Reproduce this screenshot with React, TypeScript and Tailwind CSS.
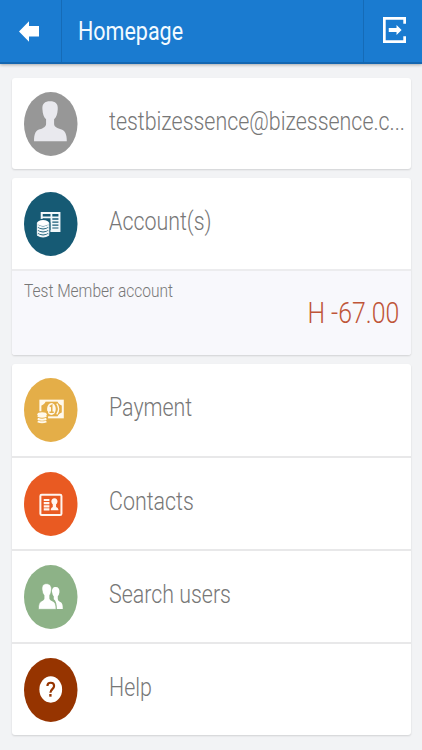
import type { ReactNode } from "react";

function Badge({ color, children }: { color: string; children: ReactNode }) {
  return (
    <svg viewBox="0 0 160 192" preserveAspectRatio="none" className="h-16 w-[53.5px] shrink-0">
      <ellipse cx="80" cy="96" rx="80" ry="96" fill={color} />
      {children}
    </svg>
  );
}

const AvatarIcon = (
  <Badge color="#979797">
    <path fill="#e9e9ee" d="M78 28C62 28 54 36 55 51C56 66 59 75 66 82V95C66 104 58 108 47 112C35 116 30 125 30 148H128C128 125 122 116 110 112C98 107 90 104 90 95V82C97 75 100 66 101 51C102 36 94 28 78 28Z" />
  </Badge>
);

const AccountIcon = (
  <Badge color="#165a74">
    <rect x="53" y="63" width="53" height="54" fill="none" stroke="#f1f7f9" strokeWidth="6" />
    <path stroke="#f1f7f9" strokeWidth="5.500" d="M53 76H106M82 63V117M82 86H106M82 95H106M82 104H106M82 112H106" />
    <path fill="#165a74" d="M35 92Q40 80 57 80T79 92V140H35Z" />
    <ellipse cx="57" cy="93" rx="18" ry="9" fill="#fff" />
    <path fill="none" stroke="#f1f7f9" strokeWidth="6" d="M40 101Q57 112 74 101M40 110Q57 121 74 110M40 119Q57 130 74 119M40 128Q57 139 74 128" />
    <path fill="none" stroke="#f1f7f9" strokeWidth="3" d="M40 92V128M74 92V128" />
  </Badge>
);

const PaymentIcon = (
  <Badge color="#e4ae48">
    <rect x="49" y="68" width="67" height="50" fill="none" stroke="#fff9ec" strokeWidth="6" />
    <path fill="#fff9ec" d="M50 69H65Q62 80 50 83ZM115 69V83Q103 80 100 69ZM115 117H100Q103 106 115 103ZM50 103Q58 105 64 117H50Z" />
    <ellipse cx="82" cy="93" rx="13" ry="18" fill="#fff9ec" />
    <path fill="none" stroke="#e4ae48" strokeWidth="4.500" d="M77 86L83 82V103M76 103H89" />
    <path fill="none" stroke="#fff9ec" strokeWidth="4" d="M98 77Q109 93 98 109" />
    <path fill="#e4ae48" d="M37 100H72V137H37Z" />
    <ellipse cx="54" cy="109" rx="14" ry="6" fill="#fff9ec" />
    <path fill="none" stroke="#fff9ec" strokeWidth="6" d="M41 113Q54 120 67 113M41 122Q54 129 67 122M41 130Q54 136 67 130" />
  </Badge>
);

const ContactsIcon = (
  <Badge color="#e95a22">
    <rect x="49" y="68" width="63" height="61" rx="4" fill="none" stroke="#fff5ef" strokeWidth="6" />
    <path stroke="#fff5ef" strokeWidth="6.500" d="M59 84H76M59 93.500H76M59 103H76M59 112H76" />
    <path fill="#fff5ef" d="M91 79C84 79 81 85 82 90Q83 95 86 97V105Q80 106 80 115H103Q103 106 96 105V97Q99 95 100 90C101 85 98 79 91 79Z" />
  </Badge>
);

const SearchIcon = (
  <Badge color="#8db287">
    <path fill="#fff" d="M95 66C86 66 83 72 84 82Q85 90 89 94V103Q98 109 98 132H116Q117 113 107 110Q101 107 101 102V94Q105 90 106 82C107 72 103 66 95 66Z" />
    <path fill="#fff" stroke="#8db287" strokeWidth="2" d="M67 56C56 56 53 64 54 75Q55 86 60 91V101Q60 105 53 108Q43 111 43 133H96Q96 111 85 108Q77 105 77 101V91Q81 86 82 75C83 64 78 56 67 56Z" />
  </Badge>
);

const HelpIcon = (
  <Badge color="#963400">
    <ellipse cx="80" cy="94.500" rx="34" ry="39.500" fill="#fff" />
    <path fill="none" stroke="#963400" strokeWidth="6.500" d="M70 84C70 71 90 71 90 84C90 93 79 94 79 104" />
    <rect x="75.500" y="108" width="7" height="8" fill="#963400" />
  </Badge>
);

function Row({ icon, label, height }: { icon: ReactNode; label: string; height: string }) {
  return (
    <div className={`flex items-center pl-3 ${height}`}>
      {icon}
      <span className="relative -top-[2px] ml-[31px] origin-left scale-x-[.856] whitespace-nowrap text-[25px] font-light text-[#777]">{label}</span>
    </div>
  );
}

const card = "overflow-hidden rounded-[3px] bg-white shadow-[0_1px_2px_rgba(0,0,0,0.14)]";

export default function App() {
  return (
    <div className="h-[750px] w-[422px] overflow-hidden bg-[#f2f3f5] font-['Roboto','Liberation_Sans',sans-serif]">
      <header className="flex h-16 items-stretch border-b-2 border-[#1467b1] bg-[#1a7bd0] shadow-[0_1px_3px_rgba(0,0,0,0.3)]">
        <div className="flex w-[61.5px] items-center border-r border-[#156bb7] pl-[19px]">
          <svg viewBox="0 0 60 62" className="h-[21px] w-5" preserveAspectRatio="none">
            <path fill="#fff" d="M0 31L30 1V15H60V46H30V61Z" />
          </svg>
        </div>
        <div className="flex flex-1 items-center border-r border-[#156bb7] pl-[16.5px]">
          <span className="origin-left scale-x-[.86] whitespace-nowrap pt-px text-[25px] text-[#f2faff]">Homepage</span>
        </div>
        <div className="flex w-[58px] items-center pb-[2px] pl-[19px]">
          <svg viewBox="0 0 68 78" className="h-[26px] w-[23px]" preserveAspectRatio="none">
            <path fill="none" stroke="#fff" strokeWidth="8" d="M64 20V4H4V74H64V58" />
            <path fill="#fff" d="M17 33H40V24L55 39L40 54V45H17Z" />
          </svg>
        </div>
      </header>
      <main className="flex flex-col gap-[9px] pl-3 pr-[11px] pt-[14px]">
        <section className={card}>
          <Row icon={AvatarIcon} label="testbizessence@bizessence.c..." height="h-[91px]" />
        </section>
        <section className={card}>
          <Row icon={AccountIcon} label="Account(s)" height="h-[91px]" />
          <div className="flex h-[86px] justify-between border-t-2 border-[#ececee] bg-[#f8f8fc] pl-3 pr-3">
            <span className="w-[160px] origin-left scale-x-[.862] whitespace-nowrap pt-[7px] text-lg leading-[26px] font-light text-[#777]">Test Member account</span>
            <span className="origin-right scale-x-[.856] whitespace-nowrap pt-[24px] text-[29px] leading-9 font-light text-[#bf5538]">H -67.00</span>
          </div>
        </section>
        <section className={`${card} divide-y-2 divide-[#e8e8e9]`}>
          <Row icon={PaymentIcon} label="Payment" height="h-[94px]" />
          <Row icon={ContactsIcon} label="Contacts" height="h-[93px]" />
          <Row icon={SearchIcon} label="Search users" height="h-[93px]" />
          <Row icon={HelpIcon} label="Help" height="h-[91px]" />
        </section>
      </main>
    </div>
  );
}
